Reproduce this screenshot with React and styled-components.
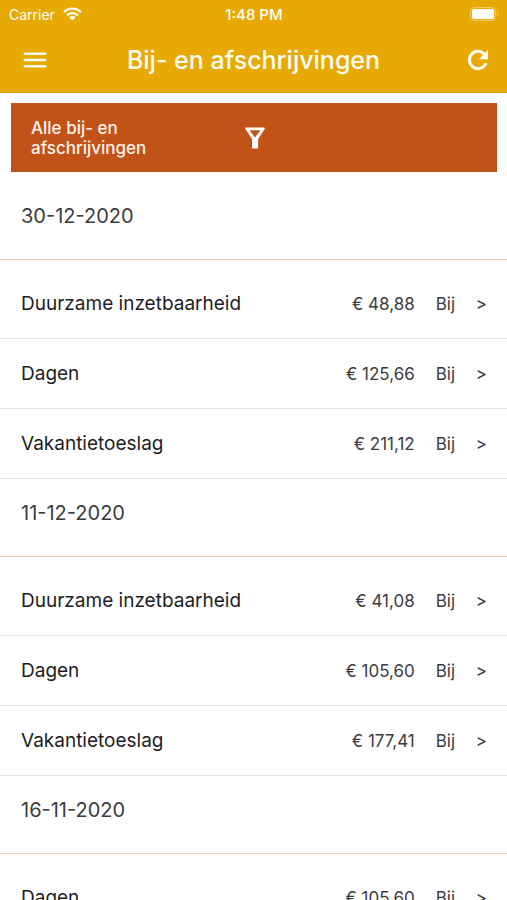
import React from "react";
import styled, { createGlobalStyle } from "styled-components";
import { MdMenu } from "react-icons/md";

const GlobalStyle = createGlobalStyle`
  * {
    box-sizing: border-box;
  }

  body {
    margin: 0;
    background: #fff;
    color: #1d1d1f;
    font-family: Inter, "Liberation Sans", sans-serif;
  }
`;

const Page = styled.div`
  display: flex;
  flex-direction: column;
  height: 100vh;
  overflow: hidden;
`;

const Header = styled.header`
  flex: none;
  background: #e7aa04;
  color: #fffdf2;
`;

const StatusBar = styled.div`
  display: grid;
  grid-template-columns: 1fr auto 1fr;
  align-items: center;
  height: 28px;
  padding: 0 8px 0 9px;
  font-size: 14px;
`;

const Carrier = styled.span`
  display: flex;
  align-items: center;
  gap: 8px;
`;

const Clock = styled.span`
  font-size: 15px;
  font-weight: 500;
`;

const BatteryIcon = styled.svg`
  justify-self: end;
`;

const NavBar = styled.div`
  display: grid;
  grid-template-columns: 1fr auto 1fr;
  align-items: center;
  height: 65px;
  padding: 0 14px 2px;
`;

const Title = styled.h1`
  margin: 0;
  font-size: 25px;
  font-weight: 500;
`;

const IconButton = styled.button`
  display: flex;
  justify-self: ${(props) => props.$side};
  padding: ${(props) => (props.$side === "start" ? "0 6px" : "0")};
  border: 0;
  background: none;
  color: inherit;
  cursor: pointer;
`;

const Content = styled.main`
  flex: 1;
  overflow-y: auto;
  padding-top: 10px;
  scrollbar-width: none;
`;

const FilterButton = styled.button`
  display: grid;
  grid-template-columns: 1fr auto 1fr;
  align-items: center;
  width: calc(100% - 21px);
  height: 69px;
  margin: 0 10px 10px 11px;
  padding: 0 18px 0 20px;
  border: 0;
  background: #c15318;
  color: #fff4ea;
  font-family: inherit;
  font-size: 17px;
  font-weight: 500;
  line-height: 20px;
  text-align: left;
  cursor: pointer;
`;

const FilterLabel = styled.span`
  max-width: 140px;
`;

const DateHeading = styled.h2`
  height: 78px;
  margin: 0 0 9px;
  padding: 22px 21px 0;
  border-bottom: 1px solid #f0cdbc;
  color: #3c3c3e;
  font-size: 20px;
  font-weight: 400;
  line-height: 24px;
`;

const List = styled.ul`
  margin: 0;
  padding: 0;
  list-style: none;
`;

const Row = styled.a`
  display: flex;
  align-items: center;
  height: 70px;
  padding: 0 20px 0 21px;
  border-bottom: 1px solid #e2e2e2;
  color: #3c3c3e;
  font-size: 17px;
  text-decoration: none;
`;

const Name = styled.span`
  flex: 1;
  color: #1d1d1f;
  font-size: 19px;
`;

const Kind = styled.span`
  width: 40px;
  margin-left: 21px;
`;

const FilterIcon = () => (
  <svg width="20" height="22" viewBox="0 0 20 22" aria-hidden="true">
    <path
      fill="#fff"
      fillRule="evenodd"
      d="M1 0.5h18q1 0 0.8 1.2L13.2 12V20.8q0 0.8-0.8 0.8H7.8Q7 21.6 7 20.8V12L0.2 1.7Q0 0.5 1 0.5ZM4.6 3.2l5.4 7.4 5.4-7.4Z"
    />
  </svg>
);

const RefreshIcon = () => (
  <svg width="30" height="30" viewBox="0 0 24 24" aria-hidden="true">
    <path
      d="M18.4 14.6A6.9 6.9 0 1 1 17 7.2"
      fill="none"
      stroke="currentColor"
      strokeWidth="2.4"
    />
    <path d="M20 4v7.4h-7.4z" fill="currentColor" />
  </svg>
);

const WifiIcon = () => (
  <svg width="19" height="14" viewBox="0 0 19 14" aria-hidden="true">
    <g fill="none" stroke="currentColor" strokeWidth="2.4">
      <path d="M1 5.2a12 12 0 0 1 17 0" />
      <path d="M4 8.4a7.8 7.8 0 0 1 11 0" />
    </g>
    <path fill="currentColor" d="M6.2 10.3a4.7 4.7 0 0 1 6.6 0L9.5 13.6z" />
  </svg>
);

const Battery = () => (
  <BatteryIcon width="29" height="14" viewBox="0 0 29 14" aria-hidden="true">
    <rect
      x="0.5"
      y="0.5"
      width="25"
      height="13"
      rx="4"
      fill="none"
      stroke="#fff"
      strokeOpacity="0.4"
    />
    <rect x="2" y="2" width="22" height="10" rx="2" fill="#fff" />
    <path d="M27 4.5q2 2.5 0 5z" fill="#fff" fillOpacity="0.5" />
  </BatteryIcon>
);

const groups = [
  {
    date: "30-12-2020",
    items: [
      { name: "Duurzame inzetbaarheid", amount: "48,88" },
      { name: "Dagen", amount: "125,66" },
      { name: "Vakantietoeslag", amount: "211,12" },
    ],
  },
  {
    date: "11-12-2020",
    items: [
      { name: "Duurzame inzetbaarheid", amount: "41,08" },
      { name: "Dagen", amount: "105,60" },
      { name: "Vakantietoeslag", amount: "177,41" },
    ],
  },
  {
    date: "16-11-2020",
    items: [{ name: "Dagen", amount: "105,60" }],
  },
];

const App = () => {
  return (
    <React.Fragment>
      <GlobalStyle />
      <Page>
        <Header>
          <StatusBar>
            <Carrier>
              Carrier
              <WifiIcon />
            </Carrier>
            <Clock>1:48 PM</Clock>
            <Battery />
          </StatusBar>
          <NavBar>
            <IconButton $side="start" aria-label="Menu">
              <MdMenu size={30} />
            </IconButton>
            <Title>Bij- en afschrijvingen</Title>
            <IconButton $side="end" aria-label="Vernieuwen">
              <RefreshIcon />
            </IconButton>
          </NavBar>
        </Header>
        <Content>
          <FilterButton>
            <FilterLabel>Alle bij- en afschrijvingen</FilterLabel>
            <FilterIcon />
          </FilterButton>
          {groups.map((group) => (
            <section key={group.date}>
              <DateHeading>{group.date}</DateHeading>
              <List>
                {group.items.map((item) => (
                  <li key={item.name}>
                    <Row href="#">
                      <Name>{item.name}</Name>
                      <span>€ {item.amount}</span>
                      <Kind>Bij</Kind>
                      <span>&gt;</span>
                    </Row>
                  </li>
                ))}
              </List>
            </section>
          ))}
        </Content>
      </Page>
    </React.Fragment>
  );
};

export default App;
